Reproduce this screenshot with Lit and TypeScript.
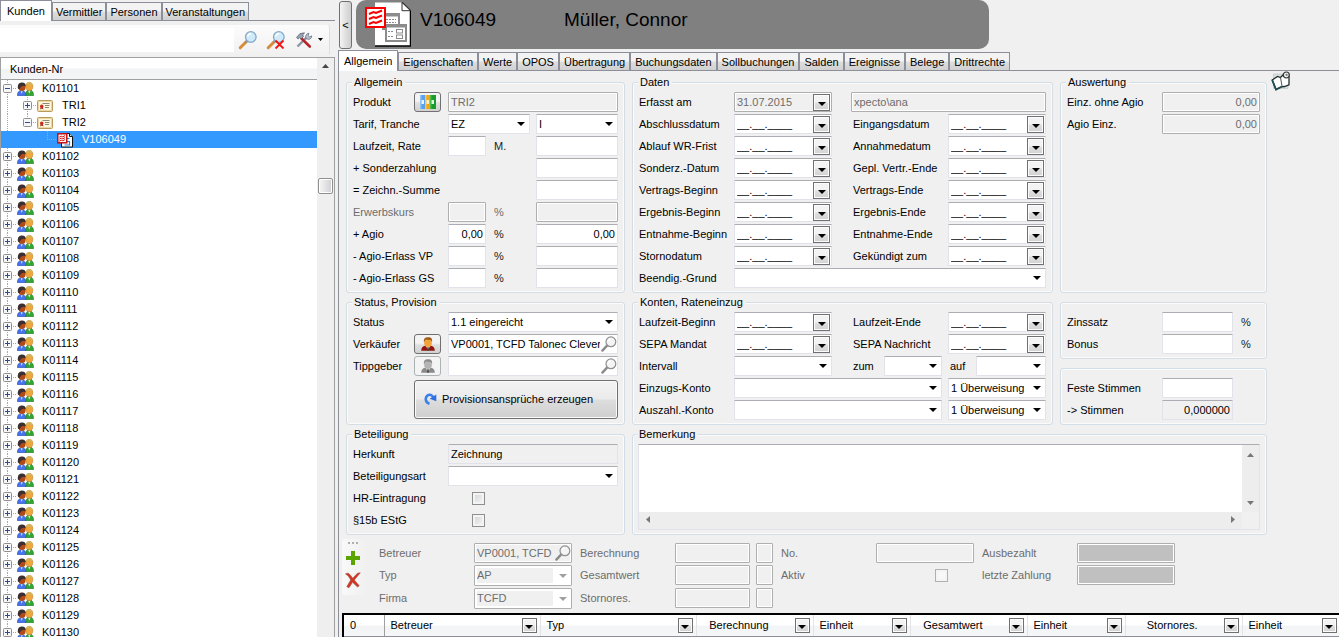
import { LitElement, html, svg, css, nothing } from "lit";
import { customElement } from "lit/decorators.js";
import { classMap } from "lit/directives/class-map.js";

type NodeKind = "customer" | "product" | "contract";
interface TreeNode { label: string; level: number; kind: NodeKind; open?: boolean; leaf?: boolean; selected?: boolean; }

const NODES: TreeNode[] = [
  { label: "K01101", level: 0, kind: "customer", open: true },
  { label: "TRI1", level: 1, kind: "product" },
  { label: "TRI2", level: 1, kind: "product", open: true },
  { label: "V106049", level: 2, kind: "contract", leaf: true, selected: true },
  ...Array.from({ length: 29 }, (_, i): TreeNode => ({ label: `K01${102 + i}`, level: 0, kind: "customer" })),
];

const MAIN_TABS = ["Allgemein", "Eigenschaften", "Werte", "OPOS", "Übertragung", "Buchungsdaten", "Sollbuchungen", "Salden", "Ereignisse", "Belege", "Drittrechte"];

const GRID_COLUMNS: { title: string; width: number; right?: boolean }[] = [
  { title: "Betreuer", width: 156 },
  { title: "Typ", width: 156 },
  { title: "Berechnung", width: 117, right: true },
  { title: "Einheit", width: 97 },
  { title: "Gesamtwert", width: 117, right: true },
  { title: "Einheit", width: 98 },
  { title: "Stornores.", width: 117, right: true },
  { title: "Einheit", width: 98 },
];

const DATE_ROWS: [string, string][] = [
  ["Abschlussdatum", "Eingangsdatum"],
  ["Ablauf WR-Frist", "Annahmedatum"],
  ["Sonderz.-Datum", "Gepl. Vertr.-Ende"],
  ["Vertrags-Beginn", "Vertrags-Ende"],
  ["Ergebnis-Beginn", "Ergebnis-Ende"],
  ["Entnahme-Beginn", "Entnahme-Ende"],
  ["Stornodatum", "Gekündigt zum"],
];

const BLANK_DATE = "__.__.____";

const arrow = html`<svg class="arrow" width="8" height="4" viewBox="0 0 8 4" aria-hidden="true"><path d="M0 0h8L4 4z" fill="currentColor"/></svg>`;

const lens = (handle: string, glass: string, rim: string, extra: unknown = nothing) => html`
  <svg width="20" height="20" viewBox="0 0 20 20" aria-hidden="true">
    <path d="M2.2 17.8L9 11" stroke="${handle}" stroke-width="3" stroke-linecap="round"/>
    <path d="M7.4 12.6L9.2 10.8" stroke="#8f8f98" stroke-width="2"/>
    <circle cx="12.8" cy="7" r="5.3" fill="${glass}" stroke="${rim}" stroke-width="1.3"/>
    <path d="M9.8 6.6a3.2 3.2 0 0 1 3.4-2.8" stroke="#fff" stroke-width="1.6" fill="none"/>
    ${extra}
  </svg>`;

const greyLens = html`
  <svg width="16" height="16" viewBox="0 0 16 16" aria-hidden="true">
    <path d="M1.4 14.6L6 9.6" stroke="#8b8b8b" stroke-width="2.4" stroke-linecap="round"/>
    <circle cx="9.9" cy="5.800" r="4.900" fill="#f4f4f4" stroke="#8f8f8f" stroke-width="1.200"/>
    <path d="M7.200 5.600a2.600 2.600 0 0 1 2.600-2.400" stroke="#fff" stroke-width="1.200" fill="none"/>
  </svg>`;

const customerIcon = html`
  <svg width="17" height="14" viewBox="0 0 17 14" aria-hidden="true">
    <path d="M8.600 13.700c0-3.900 1-5.700 3.700-5.700s4.300 1.800 4.300 5.700z" fill="#35a437" stroke="#1f7a25" stroke-width=".6"/>
    <path d="M11.100 8.400l1.200 3.200 1.300-3.200z" fill="#e8f5dc"/>
    <ellipse cx="12.300" cy="4.600" rx="3.500" ry="4.100" fill="#efa63a" stroke="#b5762a" stroke-width=".5"/>
    <path d="M8.900 3.300C9.200 1.200 10.400.3 12.300.3s3.300.9 3.500 2.900c-2-1-4.600-1-6.900.1z" fill="#d2b45c"/>
    <path d="M.4 13.700c0-3.600 1.200-5 4.100-5s4.400 1.400 4.400 5z" fill="#4674ee" stroke="#2747b4" stroke-width=".6"/>
    <path d="M3.700 9.200l1 2.600 1-2.600z" fill="#dfe8fc"/>
    <circle cx="5" cy="5.600" r="3.500" fill="#b04a18"/>
    <path d="M.9 6.600C.3 2.600 2.100.6 5 .6c2.500 0 4 1.300 3.800 3.800C6.800 3 3.700 3.200 2.400 7.600z" fill="#3b2f31"/>
  </svg>`;

const productIcon = html`
  <svg width="16" height="12" viewBox="0 0 16 12" aria-hidden="true">
    <rect x=".5" y=".5" width="15" height="11" rx="1" fill="#fdf6df" stroke="#b89a5d"/>
    <rect x="1.500" y="1.500" width="13" height="9" fill="none" stroke="#ecd6a1"/>
    <path d="M5.500 3.500h7M8 5.500h4.500M8 7.500h4" stroke="#8f8a78"/>
    <path d="M3 9.500l1-3h1.600l.9 3-1.700-.9z" fill="#8f1e14"/>
    <circle cx="4.700" cy="6.300" r="1.700" fill="#d3281c"/>
  </svg>`;

const contractIcon = html`
  <svg width="17" height="16" viewBox="0 0 17 16" aria-hidden="true">
    <path d="M4.500 1.500h8l3 3v10.500h-11z" fill="#fff" stroke="#111"/>
    <path d="M12.500 1.500v3h3" fill="#d8d8d8" stroke="#111"/>
    <path d="M8 6.500h4.500M7.500 9.500h5v3.500h-5" fill="none" stroke="#2d7bd3" stroke-width="1.200"/>
    <rect x=".8" y="1.800" width="9" height="9" fill="#fff" stroke="#c80f12" stroke-width="1.500"/>
    <path d="M2.300 5.200l2-1 1.500.6 2.200-1.200M2.300 7.200l2-1 1.500.6 2.200-1.200M2.300 9.200l2-1 1.500.6L8 7.600" fill="none" stroke="#d50f12"/>
  </svg>`;

const personIcon = (hair: string, face: string, coat: string) => html`
  <svg width="14" height="14" viewBox="0 0 14 14" aria-hidden="true">
    <path d="M.2 13.800c0-3.200 1.500-4.600 4-5h5.600c2.500.4 4 1.800 4 5z" fill="${coat}"/>
    <path d="M4.600 8.600L7 12.800l2.400-4.200z" fill="#fff"/>
    <path d="M6.500 10h1l.6 3.600H5.900z" fill="#444"/>
    <path d="M3.200 3h7.600v3.400C10.800 8.600 9 10 7 10S3.200 8.600 3.200 6.400z" fill="${face}"/>
    <path d="M2.900 5.200C2.600 1.600 4 .3 7.100.3s4.300 1.300 4 4.700L9.800 3 4.400 2.800z" fill="${hair}"/>
  </svg>`;

@customElement("app-root")
export class AppRoot extends LitElement {
  private fieldCount = 0;

  private nextId() { return `f${++this.fieldCount}`; }

  /* A caption with its text box; the grid classes place both in the group. */
  private field(label: string, opts: { value?: string; disabled?: boolean; readonly?: boolean; cls?: string; labelCls?: string; dim?: boolean } = {}) {
    const id = this.nextId();
    return html`<label class="lbl ${opts.labelCls ?? ""} ${opts.dim ? "dim" : ""}" for=${id}>${label}</label>
      ${this.box(label, { ...opts, id })}`;
  }

  private box(name: string, opts: { id?: string; value?: string; disabled?: boolean; readonly?: boolean; cls?: string } = {}) {
    return html`<input class="box ${opts.cls ?? ""}" id=${opts.id ?? this.nextId()} aria-label=${name} type="text" .value=${opts.value ?? ""}
      ?disabled=${!!opts.disabled} ?readonly=${!!opts.readonly}>`;
  }

  private select(name: string, value = "", cls = "", id = this.nextId(), disabled = false) {
    return html`<span class="select ${cls}"><select id=${id} aria-label=${name} ?disabled=${disabled}><option>${value}</option></select>${arrow}</span>`;
  }

  private selectField(label: string, value = "", cls = "", labelCls = "", disabled = false) {
    const id = this.nextId();
    return html`<label class="lbl ${labelCls} ${disabled ? "dim" : ""}" for=${id}>${label}</label>${this.select(label, value, cls, id, disabled)}`;
  }

  private date(label: string, second = false, value = BLANK_DATE, disabled = false) {
    const id = this.nextId();
    return html`<label class="lbl ${second ? "second" : ""}" for=${id}>${label}</label>
      <span class=${classMap({ compound: true, off: disabled })}>
        <input id=${id} type="text" .value=${value} ?disabled=${disabled}>
        <button class="drop" aria-label="${label} auswählen">${arrow}</button>
      </span>`;
  }

  private search(label: string, value: string, cls: string, id: string, disabled = false) {
    return html`<span class="compound ${cls} ${disabled ? "off" : ""}">
      <input id=${id} type="text" .value=${value} ?disabled=${disabled}>
      <button class="find" aria-label="${label} suchen" ?disabled=${disabled}>${greyLens}</button>
    </span>`;
  }

  private guides(node: TreeNode) {
    const width = 16 + node.level * 20;
    const x = 6 + node.level * 20;
    const tail = node.kind === "product" && node.open;
    return html`<svg class="guides" width=${width} height="17" viewBox="0 0 ${width} 17" aria-hidden="true">
      <g stroke="#a8a8a8" stroke-dasharray="1 1" fill="none">
        ${node.level === 1 ? svg`<path d="M6.500 0v17"/>` : nothing}
        ${svg`<path d="M${x + 0.5} 0v${tail || node.leaf ? 9 : 17}M${x} 8.500h${width - x}"/>`}
      </g>
      ${node.leaf ? nothing : svg`
        <rect x=${x - 3.5} y="4.500" width="8" height="8" rx="1" fill="#f7f7f7" stroke="#8e8e8e"/>
        <path d="M${x - 2} 8.500h5" stroke="#2e4a94"/>
        ${node.open ? nothing : svg`<path d="M${x + 0.5} 6v5" stroke="#2e4a94"/>`}`}
    </svg>`;
  }

  private sidebar() {
    const icons = { customer: customerIcon, product: productIcon, contract: contractIcon };
    return html`<aside class="side">
      <nav class="tabs" role="tablist">
        ${["Kunden", "Vermittler", "Personen", "Veranstaltungen"].map((t, i) => html`<button role="tab" class=${classMap({ tab: true, active: i === 0 })}>${t}</button>`)}
      </nav>
      <div class="toolbar">
        <input class="query" type="text" aria-label="Suche">
        <button class="tool" aria-label="Suchen">${lens("#d98b3a", "#cfeafb", "#86a9c6")}</button>
        <button class="tool" aria-label="Suche löschen">${lens("#d98b3a", "#cfeafb", "#86a9c6", svg`<path d="M9.500 10.500l8 8M17.500 10.500l-8 8" stroke="#f01616" stroke-width="1.800"/>`)}</button>
        <button class="tool" aria-label="Werkzeuge">
          <svg width="20" height="20" viewBox="0 0 20 20" aria-hidden="true">
            <path d="M3.500 16.500L13 7" stroke="#8a96a5" stroke-width="2.400"/>
            <path d="M12 8.500c-1-2.500.3-5 3-5.200l-1 2.200 1.500 1.300 2.200-.9c.2 2.500-2 4-4.400 3.200z" fill="#b9c3cf" stroke="#596577" stroke-width=".7"/>
            <path d="M7.500 8.500l8.300 8" stroke="#b3262b" stroke-width="2.600" stroke-linecap="round"/>
            <path d="M2.500 7.500L6 3.600l4.500-.8L8.700 5 9.500 6.500 7 9 5.500 7.600 4.200 9z" fill="#9aa4b0" stroke="#4d5868" stroke-width=".7"/>
          </svg>
          <svg class="tiny" width="5" height="3" viewBox="0 0 5 3" aria-hidden="true"><path d="M0 0h5L2.500 3z"/></svg>
        </button>
      </div>
      <div class="browser">
        <div class="list">
          <div class="listhead">Kunden-Nr</div>
          <ul role="tree">
            ${NODES.map((n) => html`<li role="treeitem" aria-selected=${n.selected ? "true" : "false"} class=${classMap({ node: true, selected: !!n.selected })}>
              ${this.guides(n)}<span class="pic">${icons[n.kind]}</span><span>${n.label}</span></li>`)}
          </ul>
        </div>
        <div class="vbar">
          <svg width="7" height="4" viewBox="0 0 7 4" aria-hidden="true"><path d="M0 4h7L3.500 0z" fill="#444"/></svg>
          <div class="thumb"></div>
        </div>
      </div>
    </aside>`;
  }

  private banner() {
    return html`<header class="top">
      <button class="collapse" aria-label="Liste einklappen">&lt;</button>
      <div class="banner">
        <svg width="46" height="46" viewBox="0 0 46 46" aria-hidden="true">
          <path d="M10 1.500h27l8.500 8V45H10z" fill="#fff"/>
          <path d="M37 1.500l8.500 8.200V45H10" fill="none" stroke="#000" stroke-width="1.500"/>
          <path d="M37 1.500v8.200h8.500z" fill="#fff" stroke="#333"/>
          <rect x="18" y="13" width="16" height="15" fill="#fff" stroke="#8b8b8b" stroke-width="2"/>
          <path d="M18 14h17" stroke="#8b8b8b" stroke-width="3"/>
          <path d="M21 18.500h10M21 21.500h10" stroke="#8b8b8b" stroke-dasharray="2 1"/>
          <rect x="21" y="24" width="20" height="16" fill="#fff" stroke="#8b8b8b" stroke-width="2"/>
          <path d="M21 25h20" stroke="#8b8b8b" stroke-width="3"/>
          <path d="M23 30.500h6M23 35.500h6" stroke="#8b8b8b" stroke-dasharray="2 1"/>
          <rect x="31.500" y="28.500" width="6" height="3.500" fill="#fff" stroke="#8b8b8b"/>
          <rect x="31.500" y="34" width="6" height="3.500" fill="#fff" stroke="#8b8b8b"/>
          <rect x="1" y="7" width="19" height="19" fill="#fff" stroke="#f80000" stroke-width="2"/>
          <path d="M4 13l4.500-2 2.500 1 6-2.500M4 18l4.500-2 2.500 1 6-2.500M4 23l4.500-2 2.500 1 6-2.500" fill="none" stroke="#f80000" stroke-width="2"/>
        </svg>
        <span class="number">V106049</span>
        <span>Müller, Connor</span>
      </div>
    </header>`;
  }

  private general() {
    return html`<fieldset class="group general">
      <legend>Allgemein</legend>
      ${this.productRow()}
      <label class="lbl wide" for="tarif">Tarif, Tranche</label>${this.select("Tarif", "EZ", "c34", "tarif")}${this.select("Tranche", "I", "c5")}
      ${this.field("Laufzeit, Rate", { labelCls: "wide", cls: "c3" })}<span class="unit">M.</span>${this.box("Rate", { cls: "c5" })}
      ${this.field("+ Sonderzahlung", { labelCls: "wide", cls: "c5" })}
      ${this.field("= Zeichn.-Summe", { labelCls: "wide", cls: "c5" })}
      ${this.field("Erwerbskurs", { labelCls: "wide", cls: "c3", disabled: true, dim: true })}<span class="unit dim">%</span>${this.box("Erwerbskurs Betrag", { cls: "c5", disabled: true })}
      ${this.field("+ Agio", { labelCls: "wide", cls: "c3 num", value: "0,00" })}<span class="unit">%</span>${this.box("Agio Betrag", { cls: "c5 num", value: "0,00" })}
      ${this.field("- Agio-Erlass VP", { labelCls: "wide", cls: "c3" })}<span class="unit">%</span>${this.box("Agio-Erlass VP Betrag", { cls: "c5" })}
      ${this.field("- Agio-Erlass GS", { labelCls: "wide", cls: "c3" })}<span class="unit">%</span>${this.box("Agio-Erlass GS Betrag", { cls: "c5" })}
    </fieldset>`;
  }

  private productRow() {
    return html`<label class="lbl" for="produkt">Produkt</label>
      <button class="push" aria-label="Produkt öffnen">
        <svg width="16" height="14" viewBox="0 0 16 14" aria-hidden="true">
          <rect width="5" height="14" fill="#5aa2e6"/><rect x="5" width="5" height="14" fill="#f5a51c"/><rect x="10" width="6" height="14" fill="#1c9c2b"/>
          <path d="M.8 0v14" stroke="#a9d1f7"/><path d="M5.800 0v14" stroke="#ffd470"/><path d="M10.800 0v14" stroke="#59cc5f"/>
          <rect x="1.500" y="5" width="2.500" height="4" fill="#e9f3fd"/><rect x="6.500" y="5" width="2.500" height="4" fill="#fff1c9"/><rect x="11.500" y="5" width="2.500" height="4" fill="#e0f7df"/>
        </svg>
      </button>
      ${this.box("Produkt", { id: "produkt", cls: "c35", value: "TRI2", disabled: true })}`;
  }

  private status() {
    return html`<fieldset class="group general">
      <legend>Status, Provision</legend>
      ${this.selectField("Status", "1.1 eingereicht", "c35", "wide")}
      <label class="lbl" for="verk">Verkäufer</label>
      <button class="push" aria-label="Verkäufer öffnen">${personIcon("#9c5a12", "#f3a33a", "#8f1710")}</button>
      ${this.search("Verkäufer", "VP0001, TCFD Talonec Clever", "c35", "verk")}
      <label class="lbl" for="tipp">Tippgeber</label>
      <button class="push" aria-label="Tippgeber öffnen" disabled>${personIcon("#8c8c8c", "#b4b4b4", "#8a8a8a")}</button>
      ${this.search("Tippgeber", "", "c35", "tipp")}
      <button class="generate">
        <svg width="13" height="13" viewBox="0 0 13 13" aria-hidden="true">
          <path d="M5.500 11.800C1.200 10.500.8 5.600 3.400 3.600 5.600 2 8.300 3 9.200 5.400" fill="none" stroke="#3b82e8" stroke-width="2.600"/>
          <path d="M5.600 6.800L12.300 2.600v6.600z" fill="#2f6fe0"/>
        </svg>
        Provisionsansprüche erzeugen
      </button>
    </fieldset>`;
  }

  private dates() {
    return html`<fieldset class="group dates">
      <legend>Daten</legend>
      ${this.date("Erfasst am", false, "31.07.2015", true)}${this.box("Erfasst von", { cls: "user", value: "xpecto\\ana", disabled: true })}
      ${DATE_ROWS.map(([a, b]) => html`${this.date(a)}${this.date(b, true)}`)}
      ${this.selectField("Beendig.-Grund", "", "full")}
    </fieldset>`;
  }

  private accounts() {
    return html`<fieldset class="group dates">
      <legend>Konten, Rateneinzug</legend>
      ${this.date("Laufzeit-Beginn")}${this.date("Laufzeit-Ende", true)}
      ${this.date("SEPA Mandat")}${this.date("SEPA Nachricht", true)}
      ${this.selectField("Intervall")}
      <div class="span">${this.selectField("zum", "", "", "")}${this.selectField("auf", "", "", "")}</div>
      ${this.selectField("Einzugs-Konto", "", "account")}${this.select("Einzugsart", "1 Überweisung")}
      ${this.selectField("Auszahl.-Konto", "", "account")}${this.select("Auszahlungsart", "1 Überweisung")}
    </fieldset>`;
  }

  private participation() {
    return html`<fieldset class="group general">
      <legend>Beteiligung</legend>
      ${this.field("Herkunft", { labelCls: "wide", cls: "c35", value: "Zeichnung", readonly: true })}
      ${this.selectField("Beteiligungsart", "", "c35", "wide")}
      <label class="lbl wide" for="hr">HR-Eintragung</label><input class="check" id="hr" type="checkbox">
      <label class="lbl wide" for="estg">§15b EStG</label><input class="check" id="estg" type="checkbox">
    </fieldset>`;
  }

  private remark() {
    return html`<fieldset class="group remark">
      <legend>Bemerkung</legend>
      <div class="memo">
        <textarea aria-label="Bemerkung"></textarea>
        <div class="scroll v">
          <svg width="7" height="4" viewBox="0 0 7 4" aria-hidden="true"><path d="M0 4h7L3.500 0z" fill="#777"/></svg>
          <svg width="7" height="4" viewBox="0 0 7 4" aria-hidden="true"><path d="M0 0h7L3.500 4z" fill="#777"/></svg>
        </div>
        <div class="scroll h">
          <svg width="4" height="7" viewBox="0 0 4 7" aria-hidden="true"><path d="M4 0v7L0 3.500z" fill="#777"/></svg>
          <svg width="4" height="7" viewBox="0 0 4 7" aria-hidden="true"><path d="M0 0v7L4 3.500z" fill="#777"/></svg>
        </div>
      </div>
    </fieldset>`;
  }

  private detail() {
    return html`<section class="detail">
      <div class="strip">
        <i class="grip"></i>
        <button class="tool" aria-label="Hinzufügen">
          <svg width="14" height="14" viewBox="0 0 14 14" aria-hidden="true"><path d="M5 0h4v5h5v4H9v5H5V9H0V5h5z" fill="#5aa500"/></svg>
        </button>
        <button class="tool" aria-label="Löschen">
          <svg width="16" height="16" viewBox="0 0 16 16" aria-hidden="true">
            <path d="M.5 2c1.500-1.300 3.500-.8 4.700.9L7.700 6.200 12.500 1.200l2.800-.4-6 7.200 4.900 5.800-1.600 1.200-5.100-4.700L4 15.700l-2.200-1L5.700 8C4.500 5.600 3 3.200.5 2z" fill="#d8331f" stroke="#96514a" stroke-width=".6"/>
          </svg>
        </button>
      </div>
      <div class="detailform">
        <label class="lbl dim" for="betreuer">Betreuer</label>${this.search("Betreuer", "VP0001, TCFD Talonec", "", "betreuer", true)}
        ${this.field("Berechnung", { disabled: true, dim: true, labelCls: "gapped" })}${this.box("Einheit", { disabled: true, cls: "u" })}
        ${this.field("No.", { disabled: true, dim: true, labelCls: "gapped" })}
        ${this.field("Ausbezahlt", { disabled: true, dim: true, cls: "dark", labelCls: "gapped" })}
        ${this.selectField("Typ", "AP", "", "", true)}
        ${this.field("Gesamtwert", { disabled: true, dim: true, labelCls: "gapped" })}${this.box("Einheit", { disabled: true, cls: "u" })}
        <label class="lbl dim gapped" for="aktiv">Aktiv</label><input class="check" id="aktiv" type="checkbox" disabled>
        ${this.field("letzte Zahlung", { disabled: true, dim: true, cls: "dark", labelCls: "gapped" })}
        ${this.selectField("Firma", "TCFD", "", "", true)}
        ${this.field("Stornores.", { disabled: true, dim: true, labelCls: "gapped" })}${this.box("Einheit", { disabled: true, cls: "u" })}
      </div>
    </section>`;
  }

  render() {
    this.fieldCount = 0;
    return html`
      ${this.sidebar()}
      <main class="main">
        ${this.banner()}
        <nav class="tabs" role="tablist">
          ${MAIN_TABS.map((t, i) => html`<button role="tab" class=${classMap({ tab: true, active: i === 0 })}>${t}</button>`)}
        </nav>
        <div class="page">
          <div class="sheet">
            <div class="groups">
              ${this.general()}
              ${this.dates()}
              <fieldset class="group results">
                <legend>Auswertung</legend>
                ${this.field("Einz. ohne Agio", { value: "0,00", disabled: true, cls: "num across" })}
                ${this.field("Agio Einz.", { value: "0,00", disabled: true, cls: "num across" })}
              </fieldset>
              ${this.status()}
              ${this.accounts()}
              <div class="stack">
                <fieldset class="group results bare">
                  ${this.field("Zinssatz")}<span class="unit">%</span>
                  ${this.field("Bonus")}<span class="unit">%</span>
                </fieldset>
                <fieldset class="group results bare">
                  ${this.field("Feste Stimmen")}<span></span>
                  ${this.field("-> Stimmen", { value: "0,000000", readonly: true, cls: "num" })}
                </fieldset>
              </div>
              ${this.participation()}
              ${this.remark()}
            </div>
            <button class="tool note" aria-label="Notiz">
              <svg width="20" height="20" viewBox="0 0 20 20" aria-hidden="true">
                <path d="M2.500 3h14.500v14.500H2.500z" fill="#d9dddd" stroke="#bcc2c2" stroke-width=".6"/>
                <path d="M1.200 9L6.500 5.500l3 1 3.500-3.500 5 2.500v8.300l-4.500 1.700-3 .3L5 18.600z" fill="#fff" stroke="#1d2b2b" stroke-width="1.300"/>
                <path d="M9.500 6.500l1.500 8.500" fill="none" stroke="#555" stroke-width="1"/>
                <path d="M1.200 9L5 18.600l5.500-2.800" fill="none" stroke="#1f4f50" stroke-width="1.800"/>
                <circle cx="15.300" cy="4" r="3" fill="#eee" stroke="#333" stroke-width="1.200"/>
                <circle cx="15.600" cy="3.800" r="1.100" fill="#777"/>
              </svg>
            </button>
          </div>
          ${this.detail()}
          <table class="grid">
            <colgroup><col style="width:41px">${GRID_COLUMNS.map((c) => html`<col style="width:${c.width}px">`)}</colgroup>
            <thead><tr>
              <th class="count" scope="col">0</th>
              ${GRID_COLUMNS.map((c) => html`<th scope="col"><div class=${classMap({ head: true, right: !!c.right })}><span>${c.title}</span><button class="drop" aria-label="${c.title} filtern">${arrow}</button></div></th>`)}
            </tr></thead>
          </table>
        </div>
      </main>`;
  }

  static styles = css`
    :host { display: flex; gap: 3px; height: 100vh; overflow: hidden; background: #f0f0f0; color: #000; font: 11px/20px "Liberation Sans", Arial, sans-serif; }
    * { box-sizing: border-box; }
    button, input, select, textarea { font: inherit; color: inherit; margin: 0; padding: 0; border: 0; background: none; border-radius: 0; min-width: 0; outline: none; }
    svg { display: block; flex: none; }
    svg.arrow { color: #000; }

    .side { flex: none; width: 335px; display: flex; flex-direction: column; }
    .main { flex: 1; min-width: 0; display: flex; flex-direction: column; }

    .tabs { display: flex; align-items: flex-end; height: 21px; flex: none; border-bottom: 1px solid #8c8e9a; }
    .tab { height: 18px; line-height: 18px; padding: 0 4px; border: 1px solid #8c8e9a; border-bottom: 0; background: linear-gradient(#f3f3f3 45%, #ddd 55%, #d0d0d0); white-space: nowrap; }
    .side .tab { padding: 0 3px; }
    .tab.active, .side .tab.active { height: 21px; line-height: 18px; padding: 0 5px 1px; margin-bottom: -1px; background: #fff; }
    .side .tab.active { padding: 0 6px 1px; }

    .toolbar { display: flex; align-items: center; height: 29px; margin: 4px 5px 3px 0; flex: none; background: linear-gradient(#fcfcfc, #f1f1f1); border-radius: 0 3px 0 0; border-right: 1px solid #ddd; }
    .query { flex: 1; height: 24px; margin-right: 4px; background: #fff; padding: 0 4px; }
    .tool { display: flex; align-items: center; gap: 4px; }
    .toolbar .tool { margin-right: 8px; }
    .toolbar .tool:last-child { margin-right: 6px; }

    .browser { flex: 1; min-height: 0; display: flex; border: 1px solid #a0a0a0; border-bottom: 0; }
    .list { flex: 1; min-width: 0; background: #fff; overflow: hidden; }
    .listhead { height: 22px; line-height: 22px; padding-left: 9px; background: linear-gradient(#fff 45%, #f2f3f5 55%, #f4f5f6); border-bottom: 1px solid #a0a0a0; }
    ul { margin: 0; padding: 0; list-style: none; }
    .node { display: flex; align-items: center; height: 17px; line-height: 17px; }
    .node.selected { background: #3399ff; color: #fff; }
    .pic { flex: none; width: 25px; }
    .vbar { width: 17px; flex: none; display: flex; flex-direction: column; align-items: center; background: #efefef; padding-top: 6px; }
    .thumb { width: 15px; height: 16px; margin-top: 110px; border: 1px solid #8f8f8f; border-radius: 2px; background: linear-gradient(90deg, #f6f6f6, #d0d0d4); box-shadow: inset 0 0 0 1px #fff; }

    .top { display: flex; height: 50px; flex: none; padding: 0 1px; gap: 4px; }
    .collapse { width: 13px; height: 48px; margin-top: 1px; border: 1px solid #707070; border-radius: 3px; background: linear-gradient(90deg, #f4f4f4, #dcdcdc 60%, #cfcfcf); }
    .banner { flex: 1; max-width: 633px; height: 49px; display: flex; align-items: flex-start; padding: 1px 9px; background: #808080; border-radius: 10px; font-size: 19px; line-height: 38px; white-space: nowrap; }
    .number { width: 144px; margin-left: 9px; }

    .page { flex: 1; display: flex; flex-direction: column; min-height: 0; border-left: 1px solid #8c8e9a; padding-left: 3px; }
    .sheet { display: flex; align-items: flex-start; padding: 4px 0 0 4px; gap: 4px; }
    .groups { flex: 1; min-width: 0; display: grid; grid-template-columns: 279fr 421fr 207fr; gap: 2px 7px; }
    .note { width: 68px; flex: none; margin-top: -4px; }

    .group { margin: 0; min-width: 0; border: 1px solid #d3dde5; border-radius: 3px; padding: 3px 6px 4px; display: grid; gap: 2px 0; grid-auto-rows: 20px; align-content: start; box-shadow: inset 0 0 0 1px #fbfbfb; }
    legend { height: 14px; line-height: 14px; padding: 0 3px 0 2px; margin-left: -1px; background: #f0f0f0; }
    .general { grid-template-columns: 61px 34px 38px 50px 1fr; }
    .dates { grid-template-columns: 95px 98fr 19px 97px 98fr; }
    .results { grid-template-columns: 95px 71px 1fr; }
    .bare { padding-top: 9px; }
    .stack { display: flex; flex-direction: column; gap: 9px; padding-top: 7px; }
    .remark { grid-column: span 2; grid-template-columns: 1fr; grid-auto-rows: auto; padding: 3px 6px 4px 5px; }

    .lbl { white-space: nowrap; }
    .general .wide { grid-column: 1 / 3; }
    .c3 { grid-column: 3; }
    .c34 { grid-column: 3 / 5; margin-right: 6px; }
    .c35 { grid-column: 3 / 6; }
    .c5 { grid-column: 5; }
    .across { grid-column: 2 / 4; }
    .unit { padding-left: 8px; color: #222; }
    .dim { color: #6d6d6d; }
    .dates .second { grid-column: 4; padding-left: 2px; }
    .user { grid-column: 4 / 6; }
    .full { grid-column: 2 / 6; }
    .account { grid-column: 2 / 5; margin-right: 6px; }
    .span { grid-column: 4 / 6; display: grid; grid-template-columns: 33px 58px 34px 1fr; }
    .span .lbl { padding-left: 2px; }
    .span .lbl:nth-of-type(2) { padding-left: 8px; }

    .box, .select, .compound { height: 20px; border: 1px solid #e2e3ea; border-top-color: #abadb3; background: #fff; border-radius: 1px; }
    .box { padding: 0 2px; line-height: 18px; width: 100%; }
    .num { text-align: right; }
    .box[readonly] { background: #f0f0f0; }
    .box:disabled, .compound.off { border-color: #afafaf; background: #f0f0f0; color: #6d6d6d; box-shadow: inset 0 0 0 1px #fff; }
    .box.dark { background: #c0c0c0; }
    .select { display: grid; grid-template-columns: 1fr 12px; align-items: center; }
    .select select { grid-area: 1 / 1 / 2 / 3; height: 17px; width: 100%; padding: 0 14px 0 2px; line-height: 17px; appearance: none; }
    .select .arrow { grid-area: 1 / 2; pointer-events: none; }
    .select:has(:disabled) { border-color: #afafaf; }
    .select select:disabled { color: #6d6d6d; opacity: 1; background: linear-gradient(#f0f0f0, #f0f0f0) 2px 1px / calc(100% - 20px) 15px no-repeat; }
    .select select:disabled + .arrow { color: #a0a0a0; }
    .compound { display: flex; align-items: center; min-width: 0; }
    .compound input { flex: 1; width: 0; height: 17px; padding-left: 2px; }
    .drop { flex: none; width: 17px; height: 17px; margin-right: 1px; border: 1px solid #707070; background: linear-gradient(#f3f3f3 45%, #dedede 55%, #d2d2d2); box-shadow: inset 0 0 0 1px #fcfcfc; display: grid; place-content: center; padding-top: 3px; }
    .find { flex: none; width: 17px; height: 18px; display: grid; place-content: center; }
    .push { width: 27px; height: 20px; border: 1px solid #707070; border-radius: 3px; background: linear-gradient(#f3f3f3 45%, #dfdfdf 55%, #d2d2d2); display: grid; place-content: center; }
    .push:disabled { border-color: #adb2b5; background: #f4f4f4; }
    .generate { grid-column: 2 / 6; height: 39px; margin-top: 2px; border: 1px solid #707070; border-radius: 3px; background: linear-gradient(#f3f3f3, #ebebeb 48%, #dddddd 52%, #cfcfcf); box-shadow: inset 0 0 0 1px #fafafa; display: flex; align-items: center; gap: 5px; padding: 0 0 2px 9px; white-space: nowrap; }
    .check { appearance: none; width: 13px; height: 13px; border: 1px solid #8e8f8f; background: linear-gradient(135deg, #cfd2d6, #f8f8f8); box-shadow: inset 0 0 0 2px #f4f4f4; align-self: center; }
    .general .check { grid-column: 3; justify-self: end; margin-right: 1px; }
    .check:disabled { border-color: #b1b1b1; background: #f8f8f8; }

    .memo { display: grid; grid-template-columns: 1fr 17px; grid-template-rows: 1fr 17px; height: 86px; border: 1px solid #e2e3ea; border-top-color: #abadb3; background: #f0f0f0; }
    .memo textarea { resize: none; background: #fff; width: 100%; height: 100%; }
    .scroll { display: flex; justify-content: space-between; align-items: center; background: #ededed; padding: 8px 0 7px; }
    .scroll.v { flex-direction: column; }
    .scroll.h { padding: 0 7px 2px; }

    .detail { display: flex; align-items: flex-start; gap: 15px; padding-top: 4px; }
    .strip { width: 22px; height: 56px; display: flex; flex-direction: column; align-items: center; gap: 7px; padding-top: 3px; background: linear-gradient(90deg, #f9f9f9, #f1f1f1); border-radius: 3px; }
    .grip { width: 10px; height: 2px; background: repeating-linear-gradient(90deg, #b0b0b0 0 2px, transparent 2px 4px); }
    .detailform { display: grid; grid-template-columns: 95px 98px 103px 75px 6px 17px 103px 98px 103px 98px; grid-template-rows: 20px 21px 20px; gap: 2px 0; padding-top: 4px; }
    .detailform .select { height: 21px; }
    .detailform .u { grid-column: 6; }
    .gapped { padding-left: 8px; }
    .detailform .check { justify-self: center; margin-left: 33px; }

    .grid { width: 100%; margin-top: 5px; flex: none; table-layout: fixed; border-collapse: collapse; }
    .grid thead { border-top: 2px solid #000; border-left: 2px solid #000; }
    .grid th { height: 22px; padding: 0; font-weight: normal; text-align: left; background: linear-gradient(#fff 45%, #f3f4f6 55%, #f5f6f7); border-right: 1px solid #e2e4e8; border-bottom: 1px solid #8c8e9a; }
    .grid th.count { padding-left: 6px; border-right-color: #a0a0a0; }
    .head { display: flex; align-items: center; justify-content: space-between; padding: 0 2px 0 6px; }
    .head.right { justify-content: flex-end; gap: 26px; }
    .head .drop { width: 15px; height: 15px; }
  `;
}
